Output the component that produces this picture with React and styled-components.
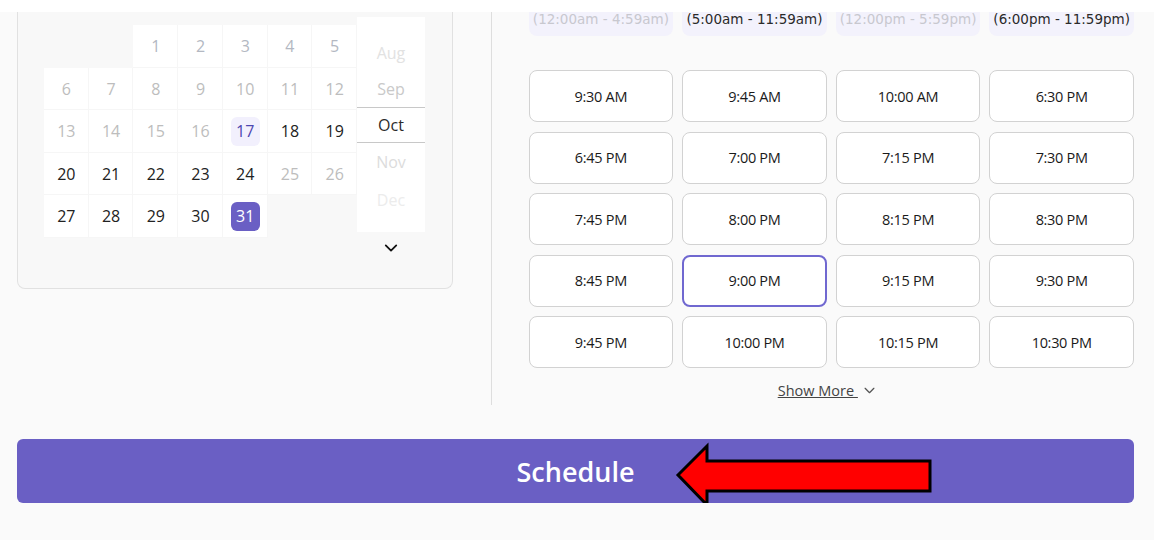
import styled, { createGlobalStyle } from "styled-components";

const GlobalStyle = createGlobalStyle`
  body {
    margin: 0;
    background: #fafafa;
    font-family: "Open Sans", "Noto Sans", sans-serif;
  }
`;

//달력 데이터
const weeks = [
  [null, null, 1, 2, 3, 4, 5],
  [6, 7, 8, 9, 10, 11, 12],
  [13, 14, 15, 16, 17, 18, 19],
  [20, 21, 22, 23, 24, 25, 26],
  [27, 28, 29, 30, 31, null, null],
];

const dayTone = (d) => {
  if (d <= 5) return "faint";
  if (d <= 16 || d === 25 || d === 26) return "muted";
  if (d === 17) return "today";
  if (d === 31) return "selected";
  return "normal";
};

const months = [
  { name: "", tone: "#f0f0f0", h: 18 },
  { name: "Aug", tone: "#e2e2e2", h: 36 },
  { name: "Sep", tone: "#c9c9c9", h: 36 },
  { name: "Oct", tone: "#2b2b2b", h: 36, active: true },
  { name: "Nov", tone: "#dcdcdc", h: 38 },
  { name: "Dec", tone: "#ececec", h: 38 },
];

const ranges = [
  { label: "(12:00am - 4:59am)", off: true },
  { label: "(5:00am - 11:59am)" },
  { label: "(12:00pm - 5:59pm)", off: true },
  { label: "(6:00pm - 11:59pm)" },
];

const times = [
  "9:30 AM", "9:45 AM", "10:00 AM", "6:30 PM",
  "6:45 PM", "7:00 PM", "7:15 PM", "7:30 PM",
  "7:45 PM", "8:00 PM", "8:15 PM", "8:30 PM",
  "8:45 PM", "9:00 PM", "9:15 PM", "9:30 PM",
  "9:45 PM", "10:00 PM", "10:15 PM", "10:30 PM",
];

const Chevron = ({ size = 14, stroke = "#111", width = 2.4 }) => (
  <svg width={size} height={size} viewBox="0 0 24 24" fill="none">
    <path
      d="M5 8.5l7 7 7-7"
      stroke={stroke}
      strokeWidth={width}
      strokeLinecap="round"
      strokeLinejoin="round"
    />
  </svg>
);

const App = () => {
  return (
    <>
      <GlobalStyle />
      <TopBar />
      <Main>
        <Upper>
          <CalendarCard>
            <DayGrid>
              {weeks.flat().map((d, i) =>
                d === null ? (
                  <EmptyCell key={i} />
                ) : (
                  <DayCell key={i}>
                    <DayNum tone={dayTone(d)}>{d}</DayNum>
                  </DayCell>
                )
              )}
            </DayGrid>
            <MonthCol>
              <MonthList>
                {months.map((m, i) => (
                  <MonthItem key={i} color={m.tone} h={m.h} active={m.active}>
                    {m.name}
                  </MonthItem>
                ))}
              </MonthList>
              <MonthNext>
                <Chevron size={18} />
              </MonthNext>
            </MonthCol>
          </CalendarCard>

          <Divider />

          <TimePanel>
            <RangeRow>
              {ranges.map((r) => (
                <RangeTab key={r.label} off={r.off}>
                  {r.label}
                </RangeTab>
              ))}
            </RangeRow>
            <TimeGrid>
              {times.map((t) => (
                <TimeBtn key={t} active={t === "9:00 PM"}>
                  {t}
                </TimeBtn>
              ))}
            </TimeGrid>
            <ShowMore>
              <span>Show More </span>
              <Chevron size={15} stroke="#555" width={2} />
            </ShowMore>
          </TimePanel>
        </Upper>

        <ScheduleWrap>
          <ScheduleBtn type="button">Schedule</ScheduleBtn>
          <Arrow width="262" height="66" viewBox="0 0 262 66">
            <polygon
              points="3,31 32,2 32,17 255,17 255,47 32,47 32,61"
              fill="#ff0000"
              stroke="#000"
              strokeWidth="3"
              strokeLinejoin="miter"
            />
          </Arrow>
        </ScheduleWrap>
      </Main>
    </>
  );
};

const TopBar = styled.div`
  height: 12px;
  background: #ffffff;
`;

const Main = styled.div`
  padding: 0 20px 0 17px;
`;

const Upper = styled.div`
  display: flex;
  align-items: flex-start;
`;

const CalendarCard = styled.div`
  box-sizing: border-box;
  display: flex;
  align-items: flex-start;
  width: 436px;
  height: 277px;
  padding: 13px 0 0 26px;
  border: 1px solid #e1e1e1;
  border-top: none;
  border-radius: 0 0 8px 8px;
  background: #f8f8f8;
`;

const DayGrid = styled.div`
  display: grid;
  grid-template-columns: repeat(7, 1fr);
  grid-auto-rows: 42.5px;
  width: 313px;
`;

const EmptyCell = styled.div`
  background: transparent;
`;

const DayCell = styled.div`
  display: flex;
  align-items: center;
  justify-content: center;
  background: #ffffff;
  box-shadow: inset -1px -1px 0 #f6f6f6;
`;

const toneColors = {
  faint: "#b3b8c2",
  muted: "#bdbdbd",
  today: "#4e47b0",
  selected: "#ffffff",
  normal: "#222222",
};

const DayNum = styled.span`
  display: flex;
  align-items: center;
  justify-content: center;
  width: 29px;
  height: 29px;
  border-radius: 6px;
  font-size: 16px;
  color: ${(p) => toneColors[p.tone]};
  background: ${(p) =>
    p.tone === "today" ? "#f2f0fd" : p.tone === "selected" ? "#6a5fc4" : "transparent"};
`;

const MonthCol = styled.div`
  display: flex;
  flex-direction: column;
  align-items: center;
  width: 68px;
  margin-top: -8px;
`;

const MonthList = styled.div`
  width: 100%;
  height: 215px;
  background: #ffffff;
`;

const MonthItem = styled.div`
  box-sizing: border-box;
  height: ${(p) => p.h}px;
  display: flex;
  align-items: center;
  justify-content: center;
  font-size: 16px;
  color: ${(p) => p.color};
  border-top: ${(p) => (p.active ? "1px solid #c8c8c8" : "none")};
  border-bottom: ${(p) => (p.active ? "1px solid #c8c8c8" : "none")};
`;

const MonthNext = styled.div`
  display: flex;
  margin-top: 7px;
`;

const Divider = styled.div`
  width: 1px;
  height: 393px;
  margin-left: 38px;
  background: #dedede;
`;

const TimePanel = styled.div`
  width: 606px;
  margin-left: 37px;
  display: flex;
  flex-direction: column;
`;

const RangeRow = styled.div`
  display: grid;
  grid-template-columns: repeat(4, 1fr);
  column-gap: 9px;
`;

const RangeTab = styled.div`
  height: 24px;
  display: flex;
  align-items: flex-start;
  justify-content: center;
  border-radius: 0 0 8px 8px;
  background: #f3f2fc;
  font-family: "DejaVu Sans", "Noto Sans", sans-serif;
  font-size: 13.5px;
  line-height: 14px;
  color: ${(p) => (p.off ? "#c8c8cf" : "#2a2a2a")};
`;

const TimeGrid = styled.div`
  display: grid;
  grid-template-columns: repeat(4, 1fr);
  grid-auto-rows: 52px;
  column-gap: 9px;
  row-gap: 9.5px;
  margin-top: 34px;
`;

const TimeBtn = styled.button`
  box-sizing: border-box;
  border: ${(p) => (p.active ? "2px solid #7068d0" : "1px solid #d2d2d2")};
  border-radius: 8px;
  background: #ffffff;
  font-family: "Open Sans", "Noto Sans", sans-serif;
  font-size: 14.5px;
  font-weight: 500;
  letter-spacing: -0.3px;
  color: #1a1a1a;
  cursor: pointer;
`;

const ShowMore = styled.div`
  display: flex;
  align-items: center;
  justify-content: center;
  gap: 4px;
  margin-top: 13px;
  margin-right: 8px;
  font-size: 14.5px;
  color: #444;
  span {
    text-decoration: underline;
    white-space: pre;
  }
`;

const ScheduleWrap = styled.div`
  position: relative;
  margin-top: 34px;
`;

const ScheduleBtn = styled.button`
  display: block;
  width: 100%;
  height: 64px;
  border: 0;
  border-radius: 6px;
  background: #6a5fc4;
  font-family: "Open Sans", "Noto Sans", sans-serif;
  font-size: 27px;
  font-weight: 600;
  color: #ffffff;
  cursor: pointer;
`;

const Arrow = styled.svg`
  position: absolute;
  left: 658px;
  top: 5px;
  overflow: visible;
`;

export default App;
